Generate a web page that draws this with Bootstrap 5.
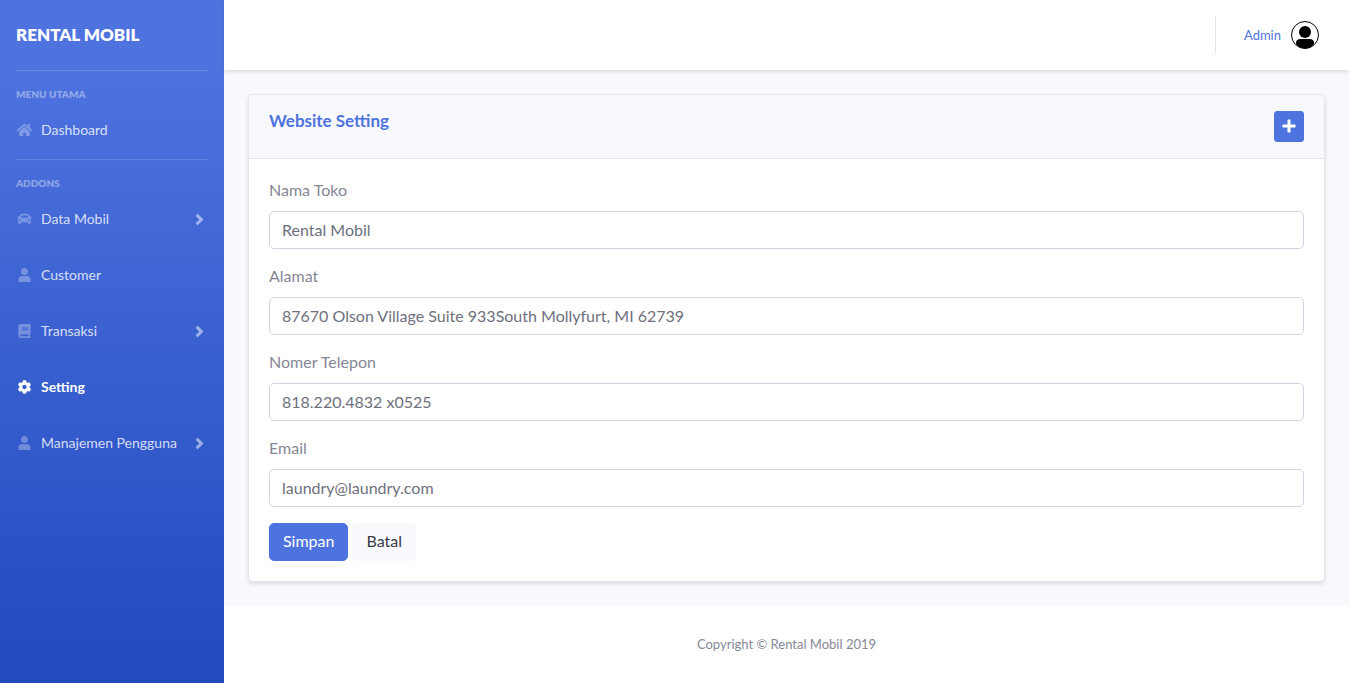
<!DOCTYPE html>
<html lang="id">
<head>
<meta charset="utf-8">
<meta name="viewport" content="width=device-width, initial-scale=1">
<title>Website Setting - Rental Mobil</title>
<link href="https://cdn.jsdelivr.net/npm/bootstrap@5.3.0/dist/css/bootstrap.min.css" rel="stylesheet">
<style>
:root { --brand: #4e73df; --line: #e3e6f0; --pale: #f8f9fc; }
body { font-family: "Lato", "Open Sans", sans-serif; font-size: 16px; line-height: 24px; color: #858796; background: #fff; }
a { text-decoration: none; }
.side-menu { width: 224px; flex: none; background: linear-gradient(180deg, #4e73df 10%, #224abe 100%); }
.side-brand { height: 70px; font-size: 17px; font-weight: 800; color: #fff; }
.side-group { margin: 0 16px; padding: 16px 0 1px; border-top: 1px solid rgba(255,255,255,.15); }
.side-title { font-size: 10px; line-height: 15px; font-weight: 800; color: rgba(255,255,255,.4); margin: 0; }
.side-link { display: flex; align-items: center; gap: 8px; height: 56px; font-size: 14px; color: rgba(255,255,255,.8); white-space: nowrap; }
.side-link:hover { color: #fff; }
.side-link svg { flex: none; width: 17px; height: 14px; fill: rgba(255,255,255,.3); }
.side-link .chevron { width: 9px; height: 17px; margin-left: auto; margin-right: 4px; fill: rgba(255,255,255,.5); }
.side-link.current { color: #fff; font-weight: 700; }
.side-link.current svg { fill: #fff; }
.topbar { height: 70px; padding-right: 30px; box-shadow: 0 2px 4px rgba(58,59,69,.15); z-index: 1; }
.topbar-rule { height: 38px; border-left: 1px solid var(--line); margin-right: 28px; }
.user-link { gap: 10px; font-size: 13px; color: var(--brand); }
.page-main { background: var(--pale); padding: 24px; }
.setting-card { border-color: var(--line); border-radius: 5px; box-shadow: 0 2px 4px rgba(58,59,69,.15); }
.setting-card .card-header { background: var(--pale); border-color: var(--line); padding: 16px 20px; }
.setting-card .card-body { padding: 20px; }
.setting-title { font-size: 17px; line-height: 19px; color: var(--brand); margin: 0; }
.btn { --bs-btn-line-height: 24px; --bs-btn-padding-x: 13px; --bs-btn-border-radius: 5px; padding-top: 5px; padding-bottom: 7px; }
.btn-primary { --bs-btn-bg: #4e73df; --bs-btn-border-color: #4e73df; --bs-btn-hover-bg: #2e59d9; --bs-btn-hover-border-color: #2653d4; }
.btn-light { --bs-btn-bg: #f8f9fc; --bs-btn-border-color: #f8f9fc; --bs-btn-color: #3a3b45; }
.btn-plus { width: 30px; height: 31px; padding: 0 0 1px; --bs-btn-border-radius: 3px; }
.form-label { line-height: 22px; margin-bottom: 10px; }
.form-control { color: #6e707e; border-color: #d1d3e2; border-radius: 5px; height: 38px; padding: 5px 12px 7px; }
.page-footer { padding: 32px 24px; font-size: 13px; line-height: 13px; }
</style>
</head>
<body>
<svg class="d-none" aria-hidden="true">
  <symbol id="i-home" viewBox="0 0 576 512"><path d="M280.400 148.300L96 300.100V464a16 16 0 0 0 16 16l112-.300a16 16 0 0 0 16-16V368a16 16 0 0 1 16-16h64a16 16 0 0 1 16 16v95.700a16 16 0 0 0 16 16L464 480a16 16 0 0 0 16-16V300L295.700 148.300a12.200 12.200 0 0 0-15.300 0zM571.600 251.500L488 182.600V44a12 12 0 0 0-12-12h-56a12 12 0 0 0-12 12v72.600L318.500 43a48 48 0 0 0-61 0L4.300 251.500a12 12 0 0 0-1.600 16.900l25.500 31a12 12 0 0 0 16.900 1.600l235.200-193.700a12.200 12.200 0 0 1 15.300 0L530.900 301a12 12 0 0 0 16.900-1.600l25.500-31a12 12 0 0 0-1.700-16.900z"/></symbol>
  <symbol id="i-car" viewBox="0 0 512 512"><path fill-rule="evenodd" d="M500 168h-56l-15-38C411 84 377 64 336 64H176c-41 0-75 20-93 66l-15 38H12c-8 0-14 7-12 15l6 24c1 5 6 9 12 9h20c-14 12-22 29-22 48v48c0 16 6 31 16 42v54c0 18 14 32 32 32h32c18 0 32-14 32-32v-32h256v32c0 18 14 32 32 32h32c18 0 32-14 32-32v-54c10-11 16-26 16-42v-48c0-19-8-36-22-48h20c6 0 11-4 12-9l6-24c2-8-4-15-12-15zm-358-14c6-16 17-26 34-26h160c17 0 28 10 34 26l22 54H120zM96 320c-19 0-32-13-32-32s13-32 32-32 48 29 48 48-29 16-48 16zm320 0c-19 0-48 3-48-16s29-48 48-48 32 13 32 32-13 32-32 32z"/></symbol>
  <symbol id="i-user" viewBox="0 0 448 512"><path d="M224 256c70.700 0 128-57.300 128-128S294.700 0 224 0 96 57.300 96 128s57.300 128 128 128zm89.600 32h-16.700c-22.200 10.200-46.900 16-72.900 16s-50.600-5.800-72.900-16h-16.700C60.200 288 0 348.200 0 422.400V464c0 26.500 21.500 48 48 48h352c26.500 0 48-21.500 48-48v-41.600c0-74.200-60.200-134.400-134.400-134.400z"/></symbol>
  <symbol id="i-book" viewBox="0 0 448 512"><path fill-rule="evenodd" d="M448 360V24c0-13.300-10.700-24-24-24H96C43 0 0 43 0 96v320c0 53 43 96 96 96h328c13.300 0 24-10.700 24-24v-16c0-7.500-3.500-14.300-8.900-18.700-4.200-15.400-4.200-59.300 0-74.700 5.400-4.300 8.900-11.100 8.900-18.600zM128 134c0-3.300 2.700-6 6-6h212c3.300 0 6 2.700 6 6v20c0 3.300-2.700 6-6 6H134c-3.300 0-6-2.700-6-6zm0 64c0-3.300 2.700-6 6-6h212c3.300 0 6 2.700 6 6v20c0 3.300-2.700 6-6 6H134c-3.300 0-6-2.700-6-6zM381.400 448H96c-17.700 0-32-14.300-32-32s14.400-32 32-32h285.400c-1.900 17.100-1.900 46.900 0 64z"/></symbol>
  <symbol id="i-cog" viewBox="0 0 512 512"><path d="M487.400 315.700l-42.600-24.600c4.300-23.200 4.300-47 0-70.200l42.600-24.600c4.900-2.800 7.100-8.600 5.500-14-11.100-35.600-30-67.800-54.700-94.600-3.800-4.100-10-5.100-14.800-2.300L380.800 110c-17.900-15.400-38.500-27.300-60.800-35.100V25.800c0-5.600-3.900-10.500-9.400-11.700-36.700-8.200-74.300-7.800-109.200 0-5.500 1.200-9.400 6.100-9.400 11.700V75c-22.200 7.900-42.800 19.800-60.800 35.100L88.700 85.500c-4.900-2.800-11-1.900-14.800 2.300-24.700 26.700-43.600 58.900-54.700 94.600-1.700 5.400.6 11.200 5.500 14L67.300 221c-4.300 23.200-4.300 47 0 70.200l-42.600 24.600c-4.900 2.800-7.100 8.600-5.500 14 11.100 35.600 30 67.800 54.700 94.600 3.800 4.100 10 5.100 14.800 2.300l42.600-24.600c17.900 15.400 38.500 27.300 60.800 35.100v49.200c0 5.600 3.900 10.500 9.400 11.700 36.700 8.200 74.300 7.800 109.200 0 5.500-1.200 9.400-6.100 9.400-11.700v-49.200c22.200-7.900 42.800-19.800 60.800-35.100l42.600 24.600c4.900 2.800 11 1.900 14.800-2.300 24.700-26.700 43.600-58.900 54.700-94.600 1.500-5.500-.7-11.300-5.600-14.100zM256 336c-44.100 0-80-35.900-80-80s35.900-80 80-80 80 35.900 80 80-35.900 80-80 80z"/></symbol>
  <symbol id="i-angle" viewBox="0 0 256 512"><path d="M224.300 273l-136 136c-9.400 9.400-24.600 9.400-33.900 0l-22.600-22.600c-9.400-9.400-9.400-24.600 0-33.900l96.400-96.400-96.400-96.400c-9.400-9.400-9.400-24.600 0-33.900L54.300 103c9.400-9.400 24.600-9.400 33.900 0l136 136c9.500 9.400 9.500 24.600.1 34z" stroke="rgba(255,255,255,.5)" stroke-width="14"/></symbol>
</svg>

<div class="d-flex min-vh-100">
  <nav class="side-menu" aria-label="Menu">
    <a class="side-brand d-flex align-items-center px-3" href="#">RENTAL MOBIL</a>
    <div class="side-group">
      <h2 class="side-title">MENU UTAMA</h2>
      <a class="side-link" href="#"><svg><use href="#i-home"/></svg>Dashboard</a>
    </div>
    <div class="side-group">
      <h2 class="side-title">ADDONS</h2>
      <a class="side-link" href="#"><svg><use href="#i-car"/></svg>Data Mobil<svg class="chevron"><use href="#i-angle"/></svg></a>
      <a class="side-link" href="#"><svg><use href="#i-user"/></svg>Customer</a>
      <a class="side-link" href="#"><svg><use href="#i-book"/></svg>Transaksi<svg class="chevron"><use href="#i-angle"/></svg></a>
      <a class="side-link current" href="#" aria-current="page"><svg><use href="#i-cog"/></svg>Setting</a>
      <a class="side-link" href="#"><svg><use href="#i-user"/></svg>Manajemen Pengguna<svg class="chevron"><use href="#i-angle"/></svg></a>
    </div>
  </nav>

  <div class="d-flex flex-column flex-grow-1">
    <header class="topbar d-flex align-items-center justify-content-end bg-white position-relative">
      <div class="topbar-rule"></div>
      <a class="user-link d-flex align-items-center" href="#">Admin
        <svg width="28" height="28" viewBox="0 0 28 28" aria-hidden="true"><circle cx="14" cy="14" r="13.500" fill="#fff" stroke="#000"/><circle cx="14" cy="11" r="6"/><path d="M5 23v-1c0-3 2-4 4-4h10c2 0 4 1 4 4v1c-2 3-5.500 4.500-9 4.500S7 26 5 23z"/></svg>
      </a>
    </header>

    <main class="page-main flex-grow-1">
      <div class="card setting-card">
        <div class="card-header d-flex justify-content-between align-items-start">
          <h1 class="setting-title fw-bold">Website Setting</h1>
          <button class="btn btn-primary btn-plus d-flex align-items-center justify-content-center" type="button" aria-label="Tambah"><svg width="14" height="14" viewBox="0 0 14 14" fill="#fff"><path d="M6 .5h2q.5 0 .5.5v4.500H13q.5 0 .5.500v2q0 .5-.5.500H8.500V13q0 .5-.5.500H6q-.5 0-.5-.5V8.500H1Q.5 8.500.5 8V6q0-.5.5-.5h4.500V1q0-.5.5-.5z"/></svg></button>
        </div>
        <form class="card-body">
          <div class="mb-3">
            <label class="form-label d-block" for="nama">Nama Toko</label>
            <input class="form-control" id="nama" type="text" value="Rental Mobil">
          </div>
          <div class="mb-3">
            <label class="form-label d-block" for="alamat">Alamat</label>
            <input class="form-control" id="alamat" type="text" value="87670 Olson Village Suite 933South Mollyfurt, MI 62739">
          </div>
          <div class="mb-3">
            <label class="form-label d-block" for="telepon">Nomer Telepon</label>
            <input class="form-control" id="telepon" type="text" value="818.220.4832 x0525">
          </div>
          <div class="mb-3">
            <label class="form-label d-block" for="email">Email</label>
            <input class="form-control" id="email" type="email" value="laundry@laundry.com">
          </div>
          <div class="d-flex gap-1">
            <button class="btn btn-primary" type="submit">Simpan</button>
            <button class="btn btn-light" type="reset">Batal</button>
          </div>
        </form>
      </div>
    </main>

    <footer class="page-footer bg-white text-center">Copyright © Rental Mobil 2019</footer>
  </div>
</div>
<script src="https://cdn.jsdelivr.net/npm/bootstrap@5.3.0/dist/js/bootstrap.bundle.min.js"></script>
</body>
</html>
